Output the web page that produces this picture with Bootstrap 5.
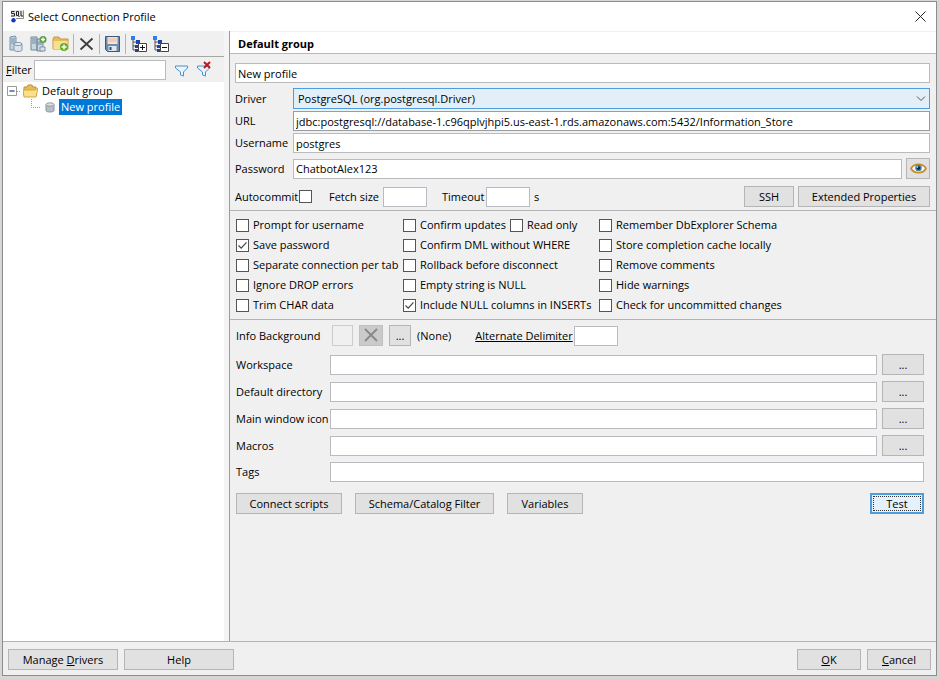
<!DOCTYPE html>
<html lang="en">
<head>
<meta charset="utf-8">
<meta name="viewport" content="width=device-width, initial-scale=1">
<title>Select Connection Profile</title>
<link href="https://cdn.jsdelivr.net/npm/bootstrap@5.3.0/dist/css/bootstrap.min.css" rel="stylesheet">
<style>
body{font:11px/16px "Open Sans","Noto Sans",sans-serif;color:#000;background:#d6d6d6;padding:1px 3px 3px 2px}
.dialog-win{min-height:calc(100vh - 4px);border:1px solid #8c8c8c;background:#f0f0f0}
.title-bar{height:29px;background:#fff;padding-left:8px}
.title-bar svg,.tools svg,.tree svg{display:block}
.close-btn{width:32px;height:28px;border:0;background:none;padding:0}
.side{width:221px;background:#fff}
.side-head{background:#f0f0f0}
.tools{height:26px;border-bottom:1px solid #a6a6a6;padding-left:3px}
.tool-btn{width:22px;height:22px;padding:2px;border:0;background:none;flex:none}
.tool-sep{width:1px;height:20px;background:#b4b4b4;margin:0 2px 0 1px}
.filter-row{height:25px;padding:0 8px 0 3px}
.filter-row label{width:24px}
.field{height:20px;min-width:0;border:1px solid #babbc0;border-radius:0;background:#fff;color:#000;padding:0 2px;outline:0}
.field.dark-edge{border-color:#9b9ca2}
.filter-field{width:132px;margin-left:4px}
.tree{padding:1px 4px}
.tree-row{height:16px}
.tree-sel{background:#0078d7;color:#fff;padding:0 2px}
.splitter{width:5px;background:#f4f4f4}
.main-pane{border-left:1px solid #9a9a9a;min-width:0}
.pane-head{height:22px;background:#fff;border-bottom:1px solid #b9b9b9;font-weight:700;padding-left:8px;line-height:24px;margin-top:1px}
.conn{padding:9px 6px 3px 5px;border-bottom:1px solid #b4b4b4}
.conn-lbl{width:58px;flex:none}
.tight{margin-bottom:2px}
.loose{margin-bottom:5px}
.driver-sel{height:21px;border:1px solid #4d9ede;background:#e2eff9;color:#000;appearance:none;border-radius:0;padding:0 4px;outline:0}
.chev{position:absolute;right:4px;top:6px;pointer-events:none}
.win-btn{height:21px;border:1px solid #b5b5b5;border-radius:0;background:#e1e1e1;color:#000;padding:0;line-height:19px;flex:none;white-space:nowrap}
.chk{appearance:none;width:13px;height:13px;border:1px solid #555;background:#fff;margin:0;flex:none}
.chk:checked{background:#fff url("data:image/svg+xml,%3Csvg xmlns='http://www.w3.org/2000/svg' viewBox='0 0 11 11'%3E%3Cpath d='M1.5 5.5l2.7 2.7 5.3-5.8' fill='none' stroke='%23444' stroke-width='1.2'/%3E%3C/svg%3E")}
.run-row{padding-top:2px}
.run-row label{white-space:nowrap}
.auto-lbl{width:64px}
.fetch-lbl{width:54px;margin-left:17px}
.time-lbl{width:44px;margin-left:15px}
.opts{display:grid;grid-template-columns:167px 196px auto;row-gap:4px;padding:6px;border-bottom:1px solid #b4b4b4}
.opts label{display:flex;align-items:center;gap:4px;white-space:nowrap}
.small-field{width:44px;flex:none}
.extra{padding:5px 12px 0 6px}
.extra-lbl{width:94px;flex:none;white-space:nowrap}
.line-row{margin-bottom:6px;gap:5px}
.line-row .extra-lbl{margin-right:-5px}
.info-row{margin-bottom:8px;gap:6px}
.info-row .extra-lbl{width:90px}
.delim-group{margin-left:18px}
.delim-group label{width:99px;white-space:nowrap}
.swatch{width:21px;height:21px;border:1px solid #ccc;padding:0;background:#f0f0f0}
.clear-btn{width:24px;background:#cacaca;border-color:#c0c0c0}
.bw-s{width:22px}.bw-eye{width:24px}.bw-dots{width:42px}.bw-ssh{width:50px}.bw-test{width:54px}.bw-ok{width:64px}.bw-var{width:76px}.bw-con{width:106px}.bw-foot{width:110px}.bw-ext{width:132px}.bw-sch{width:139px}
.script-row{gap:13px;padding-top:5px}
.test-btn{border:2px solid #4d9ede;background:#e5f1fb;line-height:17px;outline:1px dotted #333;outline-offset:-4px}
.foot{height:34px;border-top:1px solid #b4b4b4;padding:1px 5px 0;gap:6px}
</style>
</head>
<body>
<main class="dialog-win d-flex flex-column">
<header class="title-bar d-flex align-items-center">
<svg width="13" height="13" viewBox="0 0 13 13" aria-hidden="true"><path d="M0 0h13v7H0z" fill="#e4e4e4"/><path d="M3.500 1.500h-3v2h3v2.500H0M5.500 1.500v4h2v-4zM7 5.500l1.500 1.500M10 1v5h2.500" fill="none" stroke="#222"/><path d="M5 8.500h7.500v-8" fill="none" stroke="#888"/><circle cx="2.500" cy="10.300" r="2.200" fill="#1639b8"/></svg>
<span class="ms-1 flex-grow-1">Select Connection Profile</span>
<button class="close-btn" aria-label="Close"><svg class="m-auto" width="11" height="11" viewBox="0 0 11 11"><path d="M.5.5l10 10m0-10l-10 10" stroke="#222" fill="none"/></svg></button>
</header>
<div class="d-flex flex-grow-1">
<aside class="side flex-shrink-0">
<div class="side-head">
<div class="tools d-flex align-items-center">
<button class="tool-btn" aria-label="New profile"><svg width="16" height="18" viewBox="0 0 16 18"><path d="M2 2l5-1 1 1v13H2z" fill="#bfd3e3" stroke="#7794aa"/><path d="M3 4h4M3 6h4M3 8h4" stroke="#7794aa"/><path d="M6 9v6c0 2 8 2 8 0V9" fill="#dbe4ec" stroke="#8195a5"/><ellipse cx="10" cy="9" rx="4" ry="1.500" fill="#eef3f6" stroke="#8195a5"/></svg></button>
<button class="tool-btn" aria-label="Copy profile"><svg width="18" height="18" viewBox="0 0 18 18"><path d="M1 2h6v13H1zM7 4h6v12H7z" fill="#c5d7e3" stroke="#71899b"/><path d="M2 4h4M2 6h4M2 8h4M8 7h4M8 9h4" stroke="#71899b"/><path d="M10 12h5v4h-5z" fill="#d9e2ea" stroke="#8195a5"/><circle cx="13" cy="4.500" r="3.500" fill="#5f9c49"/><path d="M13 2.500v4m-2-2h4" stroke="#fff" stroke-width="1.300"/></svg></button>
<button class="tool-btn" aria-label="New group"><svg width="18" height="18" viewBox="0 0 18 18"><path d="M1 4l1-2h5l1 2h8v10H1z" fill="#e5bd58" stroke="#c79b3c"/><path d="M1.500 6h14v8h-14z" fill="#f8df92"/><circle cx="12" cy="12" r="4" fill="#65ad22"/><path d="M12 9.500v5m-2.500-2.500h5" stroke="#fff" stroke-width="1.500"/></svg></button>
<span class="tool-sep"></span>
<button class="tool-btn" aria-label="Delete"><svg width="18" height="18" viewBox="0 0 18 18"><path d="M2.500 3.500l12 11M14.500 3.500l-12 11" stroke="#3c3c3c" stroke-width="1.800" fill="none"/></svg></button>
<span class="tool-sep"></span>
<button class="tool-btn" aria-label="Save"><svg width="18" height="18" viewBox="0 0 18 18"><path d="M1.500 1.500h14v15h-12l-2-2z" fill="#6b8eb3" stroke="#3b5878"/><path d="M3.500 2h10v7h-10z" fill="#fae0d3"/><path d="M4.500 4h8M4.500 6h8" stroke="#e4b7a3"/><path d="M4.500 11h8v5h-8z" fill="#e1e6ea"/><path d="M5.500 12h2v3h-2z" fill="#334e6c"/></svg></button>
<span class="tool-sep"></span>
<button class="tool-btn" aria-label="Expand all"><svg width="18" height="18" viewBox="0 0 18 18"><path d="M1 1h4v4H1z" fill="#2c7ff0"/><path d="M3 5v10h4M3 7h4M3 11h4" fill="none" stroke="#555"/><path d="M6 5h4v4H6zM5 10h3v3H5zM5 14h3v3H5z" fill="#1e43a8"/><path d="M8.500 8.500h8v8h-8z" fill="#fff" stroke="#444"/><path d="M10 12.500h5M12.500 10v5" stroke="#111"/></svg></button>
<button class="tool-btn" aria-label="Collapse all"><svg width="18" height="18" viewBox="0 0 18 18"><path d="M1 1h4v4H1z" fill="#2c7ff0"/><path d="M3 5v10h4M3 7h4M3 11h4" fill="none" stroke="#555"/><path d="M6 5h4v4H6zM5 10h3v3H5zM5 14h3v3H5z" fill="#1e43a8"/><path d="M8.500 8.500h8v8h-8z" fill="#fff" stroke="#444"/><path d="M10 12.500h5" stroke="#111"/></svg></button>
</div>
<div class="filter-row d-flex align-items-center">
<label for="filter"><u>F</u>ilter</label><input id="filter" class="field filter-field">
<button class="tool-btn ms-1" aria-label="Apply filter"><svg width="18" height="18" viewBox="0 0 18 18"><path d="M3.500 5h12v2l-4 4v4l-3-1v-3l-5-4z" fill="#e9f4fc" stroke="#4b91c9"/></svg></button>
<button class="tool-btn" aria-label="Clear filter"><svg width="18" height="18" viewBox="0 0 18 18"><path d="M3.500 5h12v2l-4 4v4l-3-1v-3l-5-4z" fill="#e9f4fc" stroke="#4b91c9"/><path d="M10 1l6 6m0-6l-6 6" stroke="#bd1720" stroke-width="2"/></svg></button>
</div>
</div>
<div class="tree">
<div class="tree-row d-flex align-items-center">
<svg width="16" height="16" viewBox="0 0 16 16"><path d="M.5 3.500h9v9h-9z" fill="#fff" stroke="#999"/><path d="M2.500 8h5" stroke="#234a9c" stroke-width="1.300"/><path d="M10 8.500h4" stroke="#aaa" stroke-dasharray="1 1"/></svg>
<svg width="15" height="14" viewBox="0 0 15 14"><path d="M1 12V3h3l1-2h4l1 2h3v9z" fill="#e8bc55" stroke="#bd913d"/><path d="M0 6h12l3-2-2 9H1z" fill="#fbdf89" stroke="#d1a64b"/></svg>
<span class="ms-1">Default group</span></div>
<div class="tree-row d-flex align-items-center ps-4">
<svg width="10" height="16" viewBox="0 0 10 16"><path d="M.5 0v8.500H10" fill="none" stroke="#999" stroke-dasharray="1 1"/></svg>
<svg class="mx-1" width="10" height="11" viewBox="0 0 10 11"><path d="M1 2.500v6c0 2 8 2 8 0v-6" fill="#b5bec6" stroke="#8c969e"/><ellipse cx="5" cy="2.500" rx="4" ry="1.700" fill="#dce1e5" stroke="#939ca4"/></svg>
<span class="tree-sel">New profile</span></div>
</div>
</aside>
<div class="splitter flex-shrink-0"></div>
<section class="main-pane flex-grow-1">
<div class="pane-head">Default group</div>
<div class="conn d-flex flex-column">
<input class="field w-100 loose" aria-label="Profile name" value="New profile">
<div class="d-flex align-items-center position-relative tight"><label class="conn-lbl" for="driver">Driver</label>
<select id="driver" class="driver-sel flex-grow-1"><option>PostgreSQL (org.postgresql.Driver)</option></select>
<svg class="chev" width="10" height="9" viewBox="0 0 10 9"><path d="M1 2.500l4 4 4-4" fill="none" stroke="#555"/></svg></div>
<div class="d-flex align-items-center tight"><label class="conn-lbl" for="url">URL</label><input id="url" class="field dark-edge flex-grow-1" value="jdbc:postgresql://database-1.c96qplvjhpi5.us-east-1.rds.amazonaws.com:5432/Information_Store"></div>
<div class="d-flex align-items-center loose"><label class="conn-lbl" for="user">Username</label><input id="user" class="field flex-grow-1" value="postgres"></div>
<div class="d-flex align-items-center loose"><label class="conn-lbl" for="pass">Password</label><input id="pass" class="field flex-grow-1 me-1" value="ChatbotAlex123">
<button class="win-btn bw-eye" aria-label="Show password"><svg class="d-block m-auto" width="17" height="13" viewBox="0 0 17 13"><path d="M1 6.500C4 1 13 1 16 6.500 13 12 4 12 1 6.500z" fill="#fff" stroke="#cc8b22" stroke-width="1.700"/><circle cx="8.500" cy="6" r="3.300" fill="#3d86a8"/><circle cx="8.500" cy="6" r="1.800" fill="#102030"/><circle cx="7.500" cy="5" r=".8" fill="#fff"/></svg></button></div>
<div class="run-row d-flex align-items-center"><label class="auto-lbl" for="auto">Autocommit</label><input id="auto" type="checkbox" class="chk">
<label class="fetch-lbl" for="fetch">Fetch size</label><input id="fetch" class="field small-field">
<label class="time-lbl" for="timeout">Timeout</label><input id="timeout" class="field small-field"><span class="ms-1">s</span>
<button class="win-btn bw-ssh ms-auto">SSH</button><button class="win-btn bw-ext ms-1">Extended Properties</button></div>
</div>
<div class="opts">
<label><input type="checkbox" class="chk">Prompt for username</label><div class="d-flex"><label class="me-1"><input type="checkbox" class="chk">Confirm updates</label><label><input type="checkbox" class="chk">Read only</label></div><label><input type="checkbox" class="chk">Remember DbExplorer Schema</label>
<label><input type="checkbox" class="chk" checked>Save password</label><label><input type="checkbox" class="chk">Confirm DML without WHERE</label><label><input type="checkbox" class="chk">Store completion cache locally</label>
<label><input type="checkbox" class="chk">Separate connection per tab</label><label><input type="checkbox" class="chk">Rollback before disconnect</label><label><input type="checkbox" class="chk">Remove comments</label>
<label><input type="checkbox" class="chk">Ignore DROP errors</label><label><input type="checkbox" class="chk">Empty string is NULL</label><label><input type="checkbox" class="chk">Hide warnings</label>
<label><input type="checkbox" class="chk">Trim CHAR data</label><label><input type="checkbox" class="chk" checked>Include NULL columns in INSERTs</label><label><input type="checkbox" class="chk">Check for uncommitted changes</label>
</div>
<div class="extra">
<div class="info-row d-flex align-items-center"><span class="extra-lbl">Info Background</span>
<button class="swatch" aria-label="Background colour"></button>
<button class="win-btn clear-btn" aria-label="Clear colour"><svg class="d-block m-auto" width="16" height="15" viewBox="0 0 16 15"><path d="M2 1l12 12M14 1L2 13" stroke="#888" stroke-width="1.800"/></svg></button>
<button class="win-btn bw-s">...</button><span>(None)</span>
<div class="delim-group d-flex align-items-center"><label for="delim"><u>Alternate Delimiter</u></label><input id="delim" class="field small-field"></div></div>
<div class="d-flex align-items-center line-row"><label class="extra-lbl" for="ws">Workspace</label><input id="ws" class="field flex-grow-1"><button class="win-btn bw-dots">...</button></div>
<div class="d-flex align-items-center line-row"><label class="extra-lbl" for="dir">Default directory</label><input id="dir" class="field flex-grow-1"><button class="win-btn bw-dots">...</button></div>
<div class="d-flex align-items-center line-row"><label class="extra-lbl" for="icon">Main window icon</label><input id="icon" class="field flex-grow-1"><button class="win-btn bw-dots">...</button></div>
<div class="d-flex align-items-center line-row"><label class="extra-lbl" for="mac">Macros</label><input id="mac" class="field flex-grow-1"><button class="win-btn bw-dots">...</button></div>
<div class="d-flex align-items-center line-row"><label class="extra-lbl" for="tags">Tags</label><input id="tags" class="field flex-grow-1"></div>
<div class="script-row d-flex"><button class="win-btn bw-con">Connect scripts</button><button class="win-btn bw-sch">Schema/Catalog Filter</button><button class="win-btn bw-var">Variables</button><button class="win-btn test-btn bw-test ms-auto">Test</button></div>
</div>
</section>
</div>
<footer class="foot d-flex align-items-center"><button class="win-btn bw-foot">Manage <u>D</u>rivers</button><button class="win-btn bw-foot">Help</button><button class="win-btn bw-ok ms-auto"><u>O</u>K</button><button class="win-btn bw-ok"><u>C</u>ancel</button></footer>
</main>
<script src="https://cdn.jsdelivr.net/npm/bootstrap@5.3.0/dist/js/bootstrap.bundle.min.js"></script>
</body>
</html>
